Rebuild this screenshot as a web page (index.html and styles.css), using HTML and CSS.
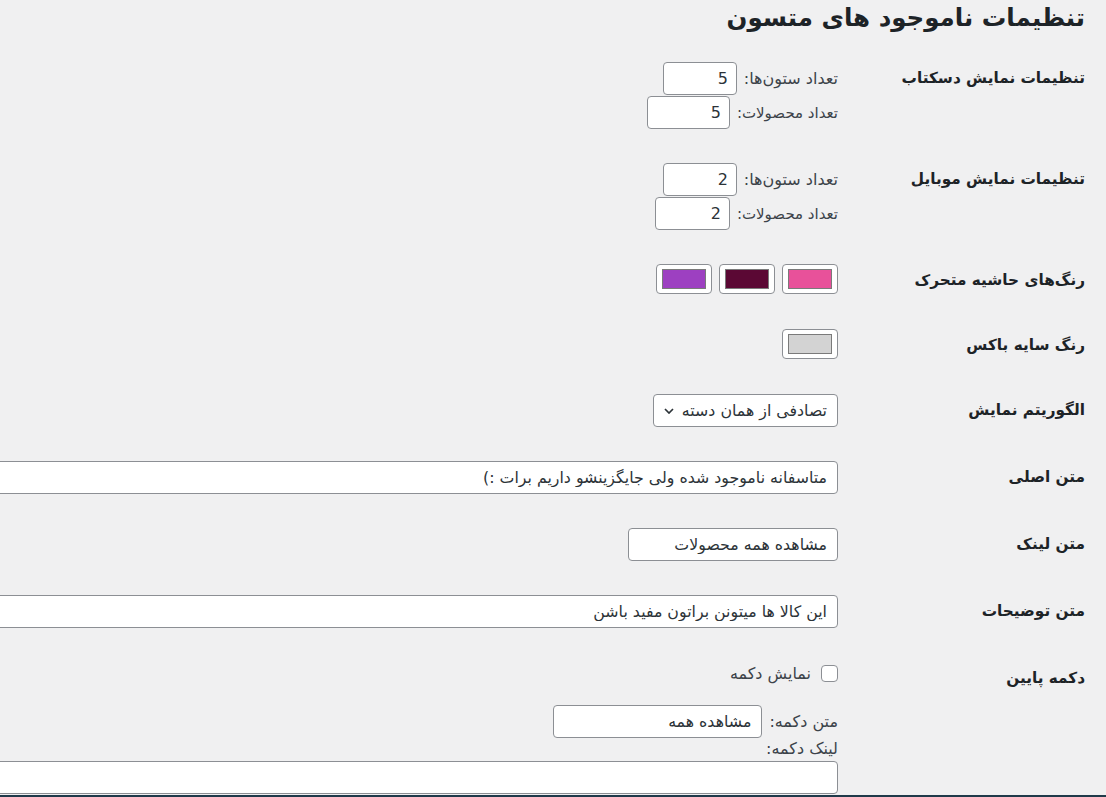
FILE: index.html
```html
<!DOCTYPE html>
<html lang="fa" dir="rtl">
<head>
<meta charset="utf-8">
<title>تنظیمات ناموجود های متسون</title>
<link rel="stylesheet" href="styles.css">
</head>
<body>
<div class="wrap">
  <h1 class="title">تنظیمات ناموجود های متسون</h1>
  <div class="form">
    <div class="row">
      <div class="th">تنظیمات نمایش دسکتاب</div>
      <div class="td">
        <label class="line"><span class="sub">تعداد ستون‌ها:</span><input class="num w74" type="text" value="5"></label>
        <label class="line"><span class="sub narrow">تعداد محصولات:</span><input class="num w83" type="text" value="5"></label>
      </div>
    </div>
    <div class="row">
      <div class="th">تنظیمات نمایش موبایل</div>
      <div class="td">
        <label class="line"><span class="sub">تعداد ستون‌ها:</span><input class="num w74" type="text" value="2"></label>
        <label class="line"><span class="sub narrow">تعداد محصولات:</span><input class="num w75" type="text" value="2"></label>
      </div>
    </div>
    <div class="row">
      <div class="th">رنگ‌های حاشیه متحرک</div>
      <div class="td">
        <div class="swatches">
          <button class="swatch" type="button"><span class="chip pink"></span></button>
          <button class="swatch" type="button"><span class="chip maroon"></span></button>
          <button class="swatch" type="button"><span class="chip purple"></span></button>
        </div>
      </div>
    </div>
    <div class="row">
      <div class="th">رنگ سایه باکس</div>
      <div class="td">
        <div class="swatches">
          <button class="swatch" type="button"><span class="chip gray"></span></button>
        </div>
      </div>
    </div>
    <div class="row">
      <div class="th">الگوریتم نمایش</div>
      <div class="td">
        <div class="select">
          <span class="select-text">تصادفی از همان دسته</span>
          <svg class="chev" width="10" height="6" viewBox="0 0 10 6"><path d="M1 1 L5 5 L9 1" fill="none" stroke="#2c3338" stroke-width="1.7"/></svg>
        </div>
      </div>
    </div>
    <div class="row">
      <div class="th">متن اصلی</div>
      <div class="td">
        <input class="text wide" type="text" value="متاسفانه ناموجود شده ولی جایگزینشو داریم برات :)">
      </div>
    </div>
    <div class="row">
      <div class="th">متن لینک</div>
      <div class="td">
        <input class="text w210" type="text" value="مشاهده همه محصولات">
      </div>
    </div>
    <div class="row">
      <div class="th">متن توضیحات</div>
      <div class="td">
        <input class="text wide" type="text" value="این کالا ها میتونن براتون مفید باشن">
      </div>
    </div>
    <div class="row last">
      <div class="th">دکمه پایین</div>
      <div class="td">
        <label class="check-line"><span class="checkbox"></span><span class="sub">نمایش دکمه</span></label>
        <label class="line btn-line"><span class="sub">متن دکمه:</span><input class="text w209" type="text" value="مشاهده همه"></label>
        <div class="link-label sub">لینک دکمه:</div>
        <input class="text wide" type="text" value="">
      </div>
    </div>
  </div>
</div>
<div class="frame-bottom"></div>
</body>
</html>
```
FILE: styles.css
```css
html, body {
  margin: 0;
  padding: 0;
  height: 100%;
  overflow: hidden;
}
body {
  direction: rtl;
  background: #f0f0f1;
  color: #1d2327;
  font-family: "DejaVu Sans", sans-serif;
  font-size: 14px;
}
.wrap {
  padding-right: 21px;
}
.title {
  margin: 0;
  padding-top: 2px;
  font-size: 24.5px;
  line-height: 32px;
  font-weight: 700;
  color: #1d2327;
}
.form {
  margin-top: 28px;
}
.row {
  display: flex;
  align-items: flex-start;
  margin-bottom: 34px;
}
.th {
  flex: none;
  width: 227px;
  padding-left: 10px;
  padding-top: 1px;
  font-weight: 700;
  font-size: 15.3px;
  line-height: 30px;
  white-space: nowrap;
}
.td {
  flex: 1;
  padding-right: 10px;
  display: flex;
  flex-direction: column;
  align-items: flex-start;
}
.line {
  display: flex;
  align-items: center;
  gap: 7px;
  height: 33px;
}
.line + .line {
  margin-top: 1px;
}
.sub {
  font-size: 16px;
  color: #3c434a;
  white-space: nowrap;
}
.sub.narrow {
  font-size: 15px;
}
input {
  font-family: "DejaVu Sans", sans-serif;
  box-sizing: border-box;
  height: 33px;
  border: 1px solid #8c8f94;
  border-radius: 4px;
  background: #fff;
  color: #2c3338;
  margin: 0;
  outline: none;
}
.num {
  font-size: 16px;
  padding: 0 8px;
  text-align: right;
}
.w74 { width: 74px; }
.w83 { width: 83px; }
.w75 { width: 75px; }
.text {
  font-size: 15.8px;
  padding: 0 10px;
  text-align: right;
}
.wide { width: 900px; }
.w210 { width: 210px; }
.w209 { width: 209px; }
.swatches {
  display: flex;
  gap: 7px;
}
.swatch {
  box-sizing: border-box;
  width: 56px;
  height: 30px;
  padding: 4px 5px;
  border: 1px solid #8c8f94;
  border-radius: 4px;
  background: #fff;
  display: flex;
  margin: 0;
}
.chip {
  flex: 1;
  border: 1px solid #7a7a7a;
}
.pink { background: #e8519a; }
.maroon { background: #5b0834; }
.purple { background: #9d40c1; }
.gray { background: #d3d3d3; }
.select {
  box-sizing: border-box;
  width: 185px;
  height: 33px;
  border: 1px solid #8c8f94;
  border-radius: 4px;
  background: #fff;
  display: flex;
  align-items: center;
  justify-content: space-between;
  padding: 0 10px 0 10px;
  color: #2c3338;
}
.select-text {
  font-size: 15.8px;
  white-space: nowrap;
}
.chev {
  display: block;
}
.check-line {
  display: flex;
  align-items: center;
  gap: 10px;
  height: 22px;
}
.checkbox {
  box-sizing: border-box;
  width: 17px;
  height: 17px;
  border: 1px solid #8c8f94;
  border-radius: 4px;
  background: #fff;
}
.btn-line {
  margin-top: 21px;
}
.link-label {
  line-height: 22px;
  height: 22px;
}
.link-label + input {
  margin-top: 1px;
}
.frame-bottom {
  position: fixed;
  left: 0;
  right: 0;
  bottom: 0;
  height: 2px;
  background: #1f3a4a;
}
```
